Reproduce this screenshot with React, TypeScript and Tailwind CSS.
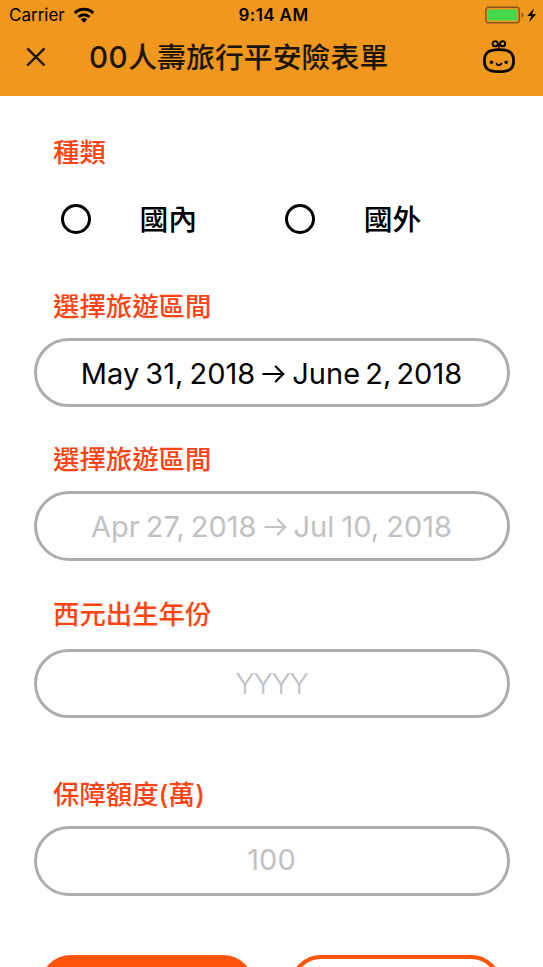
import type { ReactNode } from "react";

const cjk = "font-['Inter','Noto_Sans_CJK_TC',sans-serif]";

function StatusBar() {
  return (
    <div className="grid h-[30px] grid-cols-3 items-center pl-[9px] pr-[6px] text-black">
      <div className="flex items-center gap-[8px]">
        <span className="text-[17px] leading-[30px]">Carrier</span>
        <svg width="22" height="16" viewBox="0 0 22 16" fill="none" stroke="black" strokeWidth="3">
          <path d="M1.8 6.1a13.2 13.2 0 0 1 18.4 0" />
          <path d="M5.5 10a7.9 7.9 0 0 1 11 0" />
          <path d="M7.8 12.5a4.7 4.7 0 0 1 6.4 0L11 15.7z" fill="black" stroke="none" />
        </svg>
      </div>
      <span className="pl-[1px] text-center text-[17px] font-semibold leading-[30px] tracking-[0.4px]">9:14 AM</span>
      <div className="flex items-center justify-end">
        <svg width="52" height="18" viewBox="0 0 52 18">
          <rect x=".8" y="1.3" width="33.5" height="15.4" rx="3" fill="none" stroke="#895719" strokeWidth="1.5" />
          <rect x="3" y="3.5" width="29.2" height="11" rx="1" fill="#45d84e" />
          <path d="M36.5 6.4c2.6.8 2.6 4.4 0 5.2z" fill="#895719" />
          <path d="M49 2.5 42.4 10h4l-2.4 6.3 7.2-8h-4z" fill="black" />
        </svg>
      </div>
    </div>
  );
}

function RobotIcon() {
  return (
    <svg width="32" height="34" viewBox="0 0 32 34" fill="none" stroke="black">
      <circle cx="12.2" cy="3.7" r="2.6" strokeWidth="1.9" />
      <circle cx="19.6" cy="3.7" r="2.6" strokeWidth="1.9" />
      <path d="M15.9 4v6" strokeWidth="1.5" />
      <path d="M16 9.700C6 9.700 1.400 12.600 1.400 21c0 8.200 4.600 10.700 14.600 10.700S30.600 29.200 30.600 21C30.600 12.600 26 9.700 16 9.700z" strokeWidth="2.7" />
      <circle cx="8.5" cy="22.3" r="1.7" fill="black" stroke="none" />
      <circle cx="23.2" cy="22.3" r="1.7" fill="black" stroke="none" />
      <path d="M13.4 22.8c.3 3.4 4.700 3.400 5 0" strokeWidth="1.7" />
    </svg>
  );
}

function Arrow() {
  return (
    <svg className="mx-[7px] shrink-0" width="23" height="18" viewBox="0 0 23 18" fill="none" stroke="currentColor" strokeWidth="2.2">
      <path d="M.5 9h21M13.2 1l8 8-8 8" />
    </svg>
  );
}

function Label({ children }: { children: ReactNode }) {
  return <h2 className="h-[36px] whitespace-nowrap pl-[19px] text-[26.4px] font-medium leading-[36px] text-[#ff4312]">{children}</h2>;
}

function Field({ className, children }: { className: string; children: ReactNode }) {
  return (
    <div className={`flex w-[476px] items-center justify-center whitespace-nowrap rounded-full border-[3px] border-[#adadad] text-[29px] ${className}`}>
      {children}
    </div>
  );
}

function Option({ children }: { children: ReactNode }) {
  return (
    <label className="flex w-[225px] items-center">
      <span className="size-[30px] rounded-full border-[3px] border-black" />
      <span className="ml-[49px] pt-[2px] text-[28.8px] font-medium leading-[40px] text-black">{children}</span>
    </label>
  );
}

export default function App() {
  return (
    <div className={`h-[967px] w-[543px] overflow-hidden bg-white ${cjk}`}>
      <header className="h-[96px] bg-[#f0971e]">
        <StatusBar />
        <div className="flex h-[54px] items-center text-[#1b1509]">
          <svg className="ml-[26px]" width="20" height="20" viewBox="0 0 20 20" fill="none" stroke="currentColor" strokeWidth="2.4">
            <path d="m1.3 1.3 17.2 17.2M18.5 1.3 1.3 18.5" />
          </svg>
          <h1 className="ml-[43px] w-[394px] whitespace-nowrap pt-[1px] text-[28.8px] font-medium leading-[54px]">
            <span className="text-[29.6px] tracking-[0.5px]">00</span>
            <span className="tracking-[0.1px]">人壽旅行平安險表單</span>
          </h1>
          <RobotIcon />
        </div>
      </header>
      <main className="px-[34px] pt-[38px]">
        <Label>種類</Label>
        <div className="mt-[28px] flex h-[42px] pl-[26.5px]">
          <Option>國內</Option>
          <Option>國外</Option>
        </div>
        <div className="mt-[48px]"><Label>選擇旅遊區間</Label></div>
        <Field className="mt-[14px] h-[69px] pr-[1px] pt-[2px] text-black">
          <span className="[word-spacing:-2px]">May 31, 2018</span><Arrow /><span className="[word-spacing:-3px]">June 2, 2018</span>
        </Field>
        <div className="mt-[34px]"><Label>選擇旅遊區間</Label></div>
        <Field className="mt-[14px] h-[70px] pr-[1px] pt-[2px] text-[#c1c1c1]">
          <span className="[word-spacing:-2px]">Apr 27, 2018</span><Arrow /><span className="[word-spacing:-1px]">Jul 10, 2018</span>
        </Field>
        <div className="mt-[35px]"><Label>西元出生年份</Label></div>
        <Field className="mt-[17px] h-[69px] pr-[1px] font-light tracking-[-1.2px] text-[#c0c0c7]">YYYY</Field>
        <div className="mt-[58px]"><Label>保障額度<span className="tracking-[0.3px]">(萬)</span></Label></div>
        <Field className="mt-[14px] h-[70px] pb-[3px] pr-[1px] text-[#c1c1c1]">100</Field>
        <div className="mt-[59px] flex gap-[36px] pl-[6px]">
          <button className="h-[68px] w-[214px] rounded-[31px] bg-[#ff5409]" />
          <button className="h-[68px] w-[212px] rounded-[31px] border-4 border-[#ff5409]" />
        </div>
      </main>
    </div>
  );
}
